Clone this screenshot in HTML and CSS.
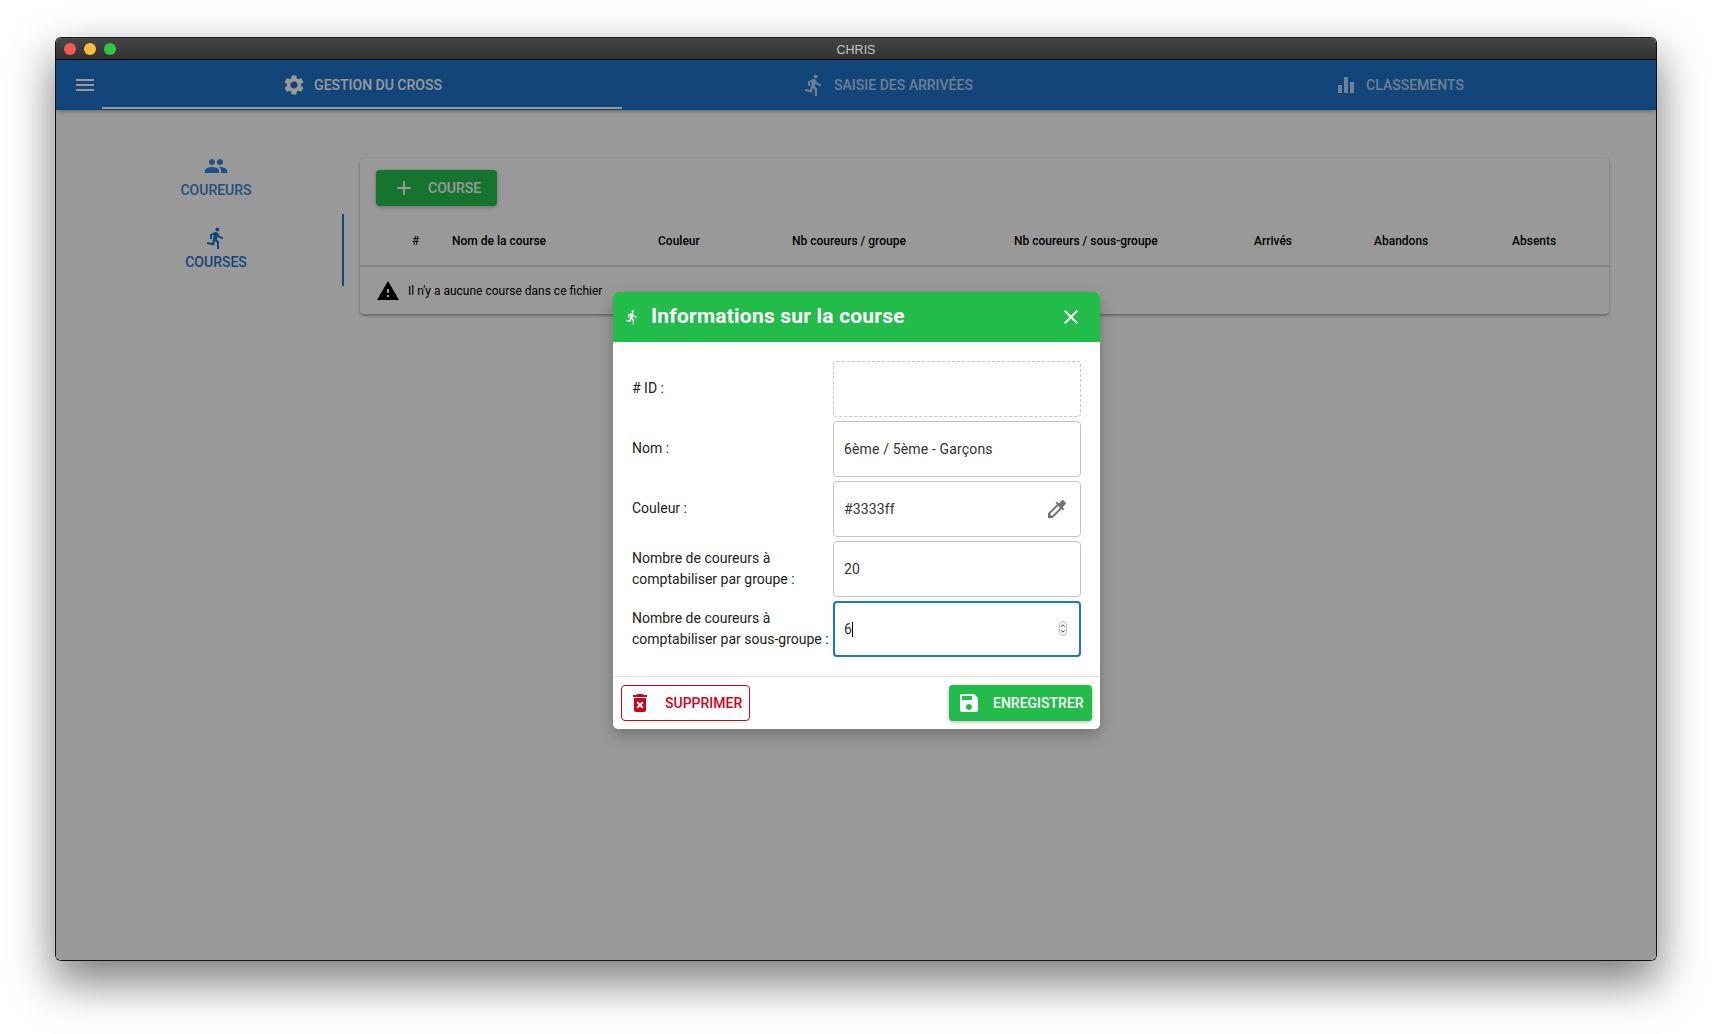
FILE: index.html
```html
<!DOCTYPE html>
<html lang="fr">
<head>
  <meta charset="UTF-8" />
  <meta name="viewport" content="width=device-width, initial-scale=1.0" />
  <title>CHRIS</title>
  <link rel="stylesheet" href="styles.css">
</head>
<body>
  <div class="window">
    <div class="titlebar">
      <div class="lights">
        <span class="light light-red"></span>
        <span class="light light-yellow"></span>
        <span class="light light-green"></span>
      </div>
      <span class="title">CHRIS</span>
    </div>

    <div class="app">
      <header class="appbar">
        <svg class="icon menu-icon" viewBox="0 0 24 24"><path d="M3 18h18v-2H3v2zm0-5h18v-2H3v2zm0-7v2h18V6H3z"/></svg>
        <nav class="tabs">
          <a class="tab tab-active">
            <svg class="icon" viewBox="0 0 24 24"><path d="M19.14 12.94c.04-.3.06-.61.06-.94 0-.32-.02-.64-.07-.94l2.03-1.58c.18-.14.23-.41.12-.61l-1.92-3.32c-.12-.22-.37-.29-.59-.22l-2.39.96c-.5-.38-1.03-.7-1.62-.94l-.36-2.54c-.04-.24-.24-.41-.48-.41h-3.84c-.24 0-.43.17-.47.41l-.36 2.54c-.59.24-1.13.57-1.62.94l-2.39-.96c-.22-.08-.47 0-.59.22L2.74 8.87c-.12.21-.08.47.12.61l2.03 1.58c-.05.3-.09.63-.09.94s.02.64.07.94l-2.03 1.58c-.18.14-.23.41-.12.61l1.92 3.32c.12.22.37.29.59.22l2.39-.96c.5.38 1.03.7 1.62.94l.36 2.54c.05.24.24.41.48.41h3.84c.24 0 .44-.17.47-.41l.36-2.54c.59-.24 1.13-.56 1.62-.94l2.39.96c.22.08.47 0 .59-.22l1.92-3.32c.12-.22.07-.47-.12-.61l-2.01-1.58zM12 15.6c-1.98 0-3.6-1.62-3.6-3.6s1.62-3.6 3.6-3.6 3.6 1.62 3.6 3.6-1.62 3.6-3.6 3.6z"/></svg>
            Gestion du cross
          </a>
          <a class="tab">
            <svg class="icon" viewBox="0 0 24 24"><path d="M13.49 5.48c1.1 0 2-.9 2-2s-.9-2-2-2-2 .9-2 2 .9 2 2 2zm-3.6 13.9l1-4.4 2.1 2v6h2v-7.5l-2.1-2 .6-3c1.3 1.5 3.3 2.5 5.5 2.5v-2c-1.9 0-3.5-1-4.3-2.4l-1-1.6c-.4-.6-1-1-1.7-1-.3 0-.5.1-.8.1l-5.2 2.2v4.7h2v-3.4l1.8-.7-1.6 8.1-4.9-1-.4 2 7 1.4z"/></svg>
            Saisie des arrivées
          </a>
          <a class="tab">
            <svg class="icon" viewBox="0 0 24 24"><path d="M10 20h4V4h-4v16zm-6 0h4v-8H4v8zM16 9v11h4V9h-4z"/></svg>
            Classements
          </a>
        </nav>
      </header>

      <div class="content">
        <aside class="sidebar">
          <a class="side-tab">
            <svg class="icon" viewBox="0 0 24 24"><path d="M16 11c1.66 0 2.99-1.34 2.99-3S17.66 5 16 5c-1.66 0-3 1.34-3 3s1.34 3 3 3zm-8 0c1.66 0 2.99-1.34 2.99-3S9.66 5 8 5C6.34 5 5 6.34 5 8s1.34 3 3 3zm0 2c-2.33 0-7 1.17-7 3.5V19h14v-2.5c0-2.33-4.67-3.5-7-3.5zm8 0c-.29 0-.62.02-.97.05 1.16.84 1.97 1.97 1.97 3.45V19h6v-2.5c0-2.33-4.67-3.5-7-3.5z"/></svg>
            <span>Coureurs</span>
          </a>
          <a class="side-tab side-tab-active">
            <svg class="icon" viewBox="0 0 24 24"><path d="M13.49 5.48c1.1 0 2-.9 2-2s-.9-2-2-2-2 .9-2 2 .9 2 2 2zm-3.6 13.9l1-4.4 2.1 2v6h2v-7.5l-2.1-2 .6-3c1.3 1.5 3.3 2.5 5.5 2.5v-2c-1.9 0-3.5-1-4.3-2.4l-1-1.6c-.4-.6-1-1-1.7-1-.3 0-.5.1-.8.1l-5.2 2.2v4.7h2v-3.4l1.8-.7-1.6 8.1-4.9-1-.4 2 7 1.4z"/></svg>
            <span>Courses</span>
          </a>
        </aside>

        <section class="card">
          <button class="add-btn">
            <svg class="icon" viewBox="0 0 24 24"><path d="M19 13h-6v6h-2v-6H5v-2h6V5h2v6h6v2z"/></svg>
            Course
          </button>
          <div class="table-head">
            <span>#</span>
            <span>Nom de la course</span>
            <span>Couleur</span>
            <span>Nb coureurs / groupe</span>
            <span>Nb coureurs / sous-groupe</span>
            <span>Arrivés</span>
            <span>Abandons</span>
            <span>Absents</span>
          </div>
          <div class="empty-row">
            <svg class="icon" viewBox="0 0 24 24"><path d="M1 21h22L12 2 1 21zm12-3h-2v-2h2v2zm0-4h-2v-4h2v4z"/></svg>
            Il n'y a aucune course dans ce fichier
          </div>
        </section>
      </div>

      <div class="backdrop"></div>

      <div class="dialog">
        <div class="dialog-head">
          <svg class="icon dialog-run" viewBox="0 0 24 24"><path d="M13.49 5.48c1.1 0 2-.9 2-2s-.9-2-2-2-2 .9-2 2 .9 2 2 2zm-3.6 13.9l1-4.4 2.1 2v6h2v-7.5l-2.1-2 .6-3c1.3 1.5 3.3 2.5 5.5 2.5v-2c-1.9 0-3.5-1-4.3-2.4l-1-1.6c-.4-.6-1-1-1.7-1-.3 0-.5.1-.8.1l-5.2 2.2v4.7h2v-3.4l1.8-.7-1.6 8.1-4.9-1-.4 2 7 1.4z"/></svg>
          <h2>Informations sur la course</h2>
          <svg class="icon dialog-close" viewBox="0 0 24 24"><path d="M19 6.41L17.59 5 12 10.59 6.41 5 5 6.41 10.59 12 5 17.59 6.41 19 12 13.41 17.59 19 19 17.59 13.41 12z"/></svg>
        </div>

        <div class="form">
          <label class="label-short"># ID :</label>
          <div class="field field-disabled"></div>

          <label class="label-short">Nom :</label>
          <div class="field">6ème / 5ème - Garçons</div>

          <label class="label-short">Couleur :</label>
          <div class="field">
            #3333ff
            <svg class="icon picker-icon" viewBox="0 0 24 24"><path d="M20.71 5.63l-2.34-2.34c-.39-.39-1.02-.39-1.41 0l-3.12 3.12-1.93-1.91-1.41 1.41 1.42 1.42L3 16.25V21h4.75l8.92-8.92 1.42 1.42 1.41-1.41-1.92-1.92 3.12-3.12c.4-.4.4-1.03.01-1.42zM6.92 19L5 17.08l8.06-8.06 1.92 1.92L6.92 19z"/></svg>
          </div>

          <label>Nombre de coureurs à<br>comptabiliser par groupe :</label>
          <div class="field">20</div>

          <label>Nombre de coureurs à<br>comptabiliser par sous-groupe :</label>
          <div class="field field-focus">
            6<span class="caret"></span>
            <svg class="spin" viewBox="0 0 8 15"><rect x="0.5" y="0.5" width="7" height="14" rx="3.5" fill="#fff" stroke="#bbb"/><path d="M2.2 5.6L4 3.8l1.8 1.8M2.2 9.4L4 11.2l1.8-1.8" fill="none" stroke="#333"/></svg>
          </div>
        </div>

        <div class="dialog-foot">
          <button class="btn btn-delete">
            <svg class="icon" viewBox="0 0 24 24"><path d="M6 19c0 1.1.9 2 2 2h8c1.1 0 2-.9 2-2V7H6v12zm2.46-7.12l1.41-1.41L12 12.59l2.12-2.12 1.41 1.41L13.41 14l2.12 2.12-1.41 1.41L12 15.41l-2.12 2.12-1.41-1.41L10.59 14l-2.13-2.12zM15.5 4l-1-1h-5l-1 1H5v2h14V4z"/></svg>
            Supprimer
          </button>
          <button class="btn btn-save">
            <svg class="icon" viewBox="0 0 24 24"><path d="M17 3H5c-1.11 0-2 .9-2 2v14c0 1.1.89 2 2 2h14c1.1 0 2-.9 2-2V7l-4-4zm-5 16c-1.66 0-3-1.34-3-3s1.34-3 3-3 3 1.34 3 3-1.34 3-3 3zm3-10H5V5h10v4z"/></svg>
            Enregistrer
          </button>
        </div>
      </div>
    </div>
  </div>
</body>
</html>
```

FILE: styles.css
```css
* {
  box-sizing: border-box;
}
body {
  margin: 0;
  background-color: #fff;
  font-family: Roboto, sans-serif;
  font-size: 14px;
  height: 1034px;
  overflow: hidden;
}
.icon {
  display: block;
  width: 24px;
  height: 24px;
  flex: none;
  fill: currentColor;
}
.window {
  position: relative;
  width: 1602px;
  height: 924px;
  margin: 37px 0 0 55px;
  border: 1px solid #111;
  border-top-color: #222;
  border-radius: 6px;
  overflow: hidden;
  display: flex;
  flex-direction: column;
  box-shadow: 0 20px 45px 2px rgba(0, 0, 0, 0.5);
}
.titlebar {
  position: relative;
  height: 22px;
  flex: none;
  display: flex;
  align-items: center;
  justify-content: center;
  padding-top: 2px;
  background: linear-gradient(#464646, #333);
  border-bottom: 1px solid #000;
}
.lights {
  position: absolute;
  left: 8px;
  top: 5px;
  display: flex;
  gap: 8px;
}
.light {
  width: 12px;
  height: 12px;
  border-radius: 50%;
}
.light-red {
  background-color: #fc5753;
}
.light-yellow {
  background-color: #fdbc40;
}
.light-green {
  background-color: #33c748;
}
.title {
  font-family: "Liberation Sans", sans-serif;
  font-size: 12.5px;
  color: #c4c4c4;
}
.app {
  position: relative;
  flex: 1;
  background-color: #fff;
}
.appbar {
  height: 50px;
  background-color: #1e75ce;
  display: flex;
  box-shadow: 0 2px 4px rgba(0, 0, 0, 0.25);
  position: relative;
}
.menu-icon {
  color: #fff;
  margin: 13px 0 0 17px;
}
.tabs {
  display: grid;
  grid-template-columns: 520px 531px 492px;
  margin-left: 5px;
}
.tab {
  display: flex;
  align-items: center;
  justify-content: center;
  gap: 8px;
  height: 49px;
  padding-top: 3px;
  color: rgba(255, 255, 255, 0.7);
  font-weight: 500;
  text-transform: uppercase;
  border-bottom: 2px solid transparent;
}
.tab-active {
  color: #fff;
  border-bottom-color: #fff;
}
.content {
  display: flex;
  padding: 32px 47px 0 32px;
}
.sidebar {
  width: 256px;
  flex: none;
}
.side-tab {
  height: 72px;
  padding-top: 12px;
  display: flex;
  flex-direction: column;
  align-items: center;
  gap: 4px;
  color: #3a86d4;
  font-weight: 500;
  line-height: 16px;
  text-transform: uppercase;
}
.side-tab-active {
  color: #1e75ce;
  box-shadow: inset -2px 0 0 #1e75ce;
}
.card {
  flex: 1;
  margin: 16px 0 0 16px;
  height: 156px;
  background-color: #fff;
  border-radius: 4px;
  box-shadow: 0 2px 3px rgba(0, 0, 0, 0.3), 0 0 2px rgba(0, 0, 0, 0.1);
}
.add-btn {
  display: flex;
  align-items: center;
  gap: 12px;
  height: 36px;
  margin: 12px 0 12px 16px;
  padding: 0 16px;
  border: none;
  border-radius: 4px;
  background-color: #25c14e;
  color: #fff;
  font-family: inherit;
  font-size: 14px;
  font-weight: 500;
  text-transform: uppercase;
  box-shadow: 0 1px 4px rgba(0, 0, 0, 0.3);
}
.table-head {
  display: grid;
  grid-template-columns: 40px 206px 134px 222px 240px 120px 138px 1fr;
  align-items: center;
  height: 49px;
  padding: 0 0 2px 52px;
  font-size: 12px;
  font-weight: 500;
  color: #000;
  border-bottom: 2px solid #d8d8d8;
}
.empty-row {
  display: flex;
  align-items: center;
  gap: 8px;
  height: 47px;
  padding-left: 16px;
  font-size: 12px;
  color: #000;
}
.backdrop {
  position: absolute;
  inset: 0;
  background-color: rgba(0, 0, 0, 0.4);
}
.dialog {
  position: absolute;
  left: 557px;
  top: 232px;
  width: 487px;
  height: 437px;
  background-color: #fff;
  border-radius: 5px;
  overflow: hidden;
  box-shadow: 0 6px 16px rgba(0, 0, 0, 0.25);
  display: flex;
  flex-direction: column;
}
.dialog-head {
  position: relative;
  height: 50px;
  flex: none;
  display: flex;
  align-items: center;
  padding: 0 0 2px 11px;
  background-color: #21bc4a;
  color: #fff;
}
.dialog-run {
  width: 16px;
  height: 16px;
  margin-top: 2px;
}
.dialog-head h2 {
  margin: 0 0 0 11px;
  font-size: 21px;
  font-weight: 700;
  letter-spacing: 0.2px;
}
.dialog-close {
  position: absolute;
  right: 17px;
  top: 13px;
}
.form {
  display: grid;
  grid-template-columns: 201px 248px;
  grid-auto-rows: 56px;
  row-gap: 4px;
  padding: 19px 0 19px 19px;
  border-bottom: 1px solid #e0e0e0;
}
.form label {
  align-self: center;
  line-height: 21px;
  color: #212121;
  white-space: nowrap;
}
.form .label-short {
  padding-bottom: 2px;
}
.field {
  position: relative;
  display: flex;
  align-items: center;
  padding-left: 10px;
  border: 1px solid #c4c4c4;
  border-radius: 4px;
  color: #333;
  letter-spacing: 0.15px;
}
.field-disabled {
  border-style: dashed;
}
.field-focus {
  padding-left: 9px;
  border: 2px solid #1976d2;
}
.caret {
  width: 1px;
  height: 15px;
  background-color: #000;
}
.picker-icon {
  position: absolute;
  right: 11px;
  top: 15px;
  color: #757575;
}
.spin {
  position: absolute;
  right: 12px;
  top: 18px;
  width: 8px;
  height: 15px;
}
.dialog-foot {
  flex: 1;
  display: flex;
  justify-content: space-between;
  padding: 8px;
}
.btn {
  display: flex;
  align-items: center;
  height: 36px;
  border-radius: 4px;
  font-family: inherit;
  font-size: 14px;
  font-weight: 500;
  text-transform: uppercase;
}
.btn-delete {
  gap: 13px;
  width: 129px;
  padding: 0 0 0 6px;
  background-color: #fff;
  border: 1px solid #d0021b;
  color: #d0021b;
}
.btn-save {
  gap: 12px;
  width: 143px;
  padding: 0 0 0 8px;
  border: none;
  background-color: #21bc4a;
  color: #fff;
  box-shadow: 0 1px 4px rgba(0, 0, 0, 0.3);
}
```
